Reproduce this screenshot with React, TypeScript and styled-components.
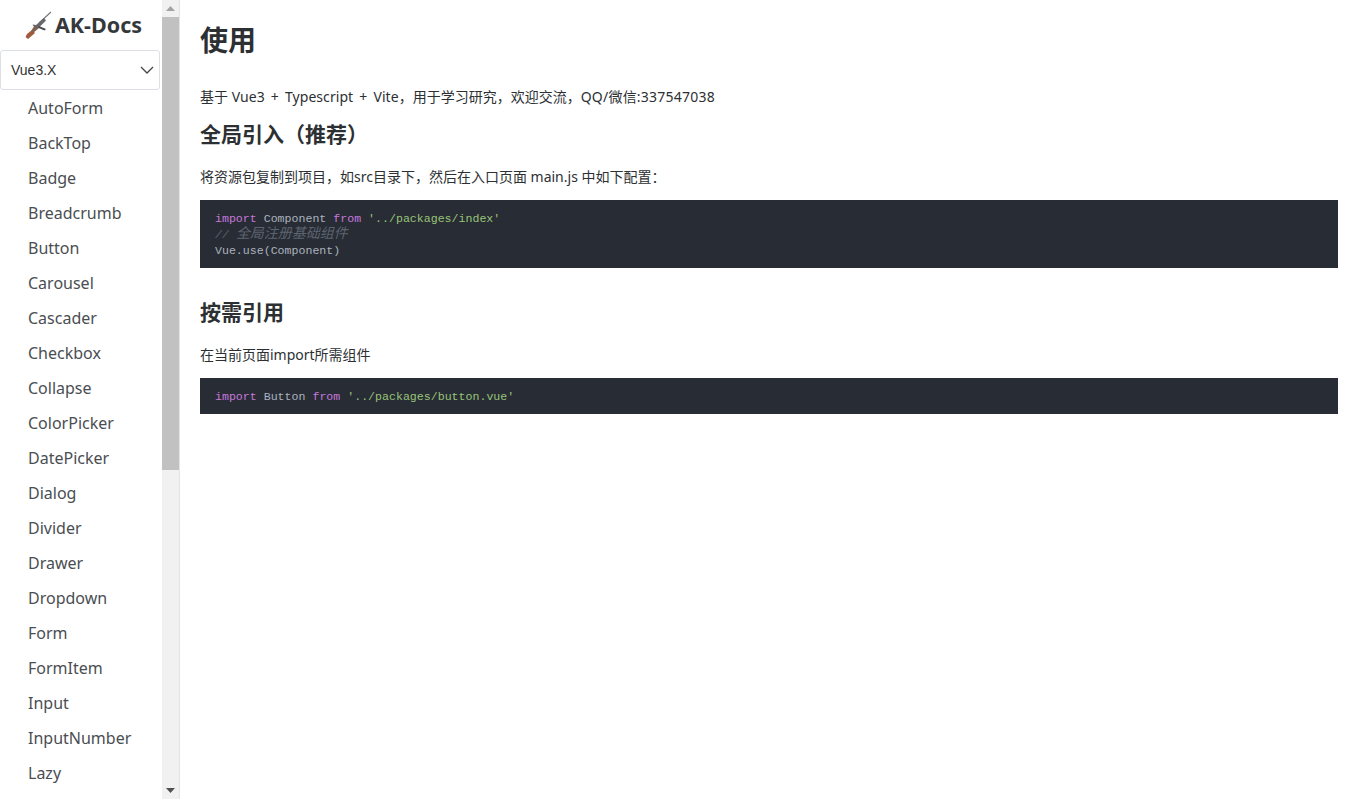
import React from "react";
import styled, { createGlobalStyle } from "styled-components";

const Global = createGlobalStyle`
  html, body { margin: 0; padding: 0; height: 100%; overflow: hidden; background: #fff; }
  #root { height: 100%; }
  * { box-sizing: border-box; }
`;

const SANS = `"Noto Sans", "Noto Sans CJK SC", sans-serif`;

const Page = styled.div`
  display: flex;
  height: 799px;
  font-family: ${SANS};
  color: #2c3033;
`;

const Sidebar = styled.aside`
  flex: 0 0 180px;
  height: 100%;
  display: flex;
  overflow: hidden;
  border-right: 1px solid #e4e4e4;
`;

const SideContent = styled.div`
  flex: 0 0 162px;
  height: 100%;
  overflow: hidden;
`;

const ScrollBar = styled.div`
  flex: 0 0 17px;
  height: 100%;
  display: flex;
  flex-direction: column;
  background: #f1f1f1;
`;

const ScrollButton = styled.div`
  flex: 0 0 17px;
  display: flex;
  align-items: center;
  justify-content: center;
`;

const ScrollTrack = styled.div`
  flex: 1;
`;

const ScrollThumb = styled.div`
  height: 453px;
  background: #c1c1c1;
`;

const Brand = styled.div`
  height: 50px;
  display: flex;
  align-items: center;
  justify-content: center;
  gap: 3px;
  padding: 0 0 1px 4px;
`;

const BrandName = styled.span`
  font-size: 21.5px;
  font-weight: 700;
  color: #35383b;
  white-space: nowrap;
`;

const VersionSelect = styled.div`
  width: 160px;
  height: 40px;
  padding: 0 5px 0 10px;
  display: flex;
  align-items: center;
  justify-content: space-between;
  background: #fff;
  border: 1px solid #dcdfe6;
  border-radius: 3px;
  font-family: "Liberation Sans", Arial, sans-serif;
  font-size: 14px;
  color: #333;
`;

const Nav = styled.ul`
  list-style: none;
  margin: 0;
  padding: 1px 0 0;
`;

const NavItem = styled.li`
  height: 35px;
  line-height: 35px;
  padding-left: 28px;
  font-size: 16px;
  color: #4a4e52;
  white-space: nowrap;
`;

const Main = styled.main`
  flex: 1;
  min-width: 0;
  padding: 0 20px;
`;

const Title = styled.h1`
  margin: 0;
  padding-top: 20px;
  height: 87px;
  font-size: 28px;
  line-height: 40px;
  font-weight: 700;
  color: #2c3033;
`;

const Paragraph = styled.p<{ $top?: number }>`
  margin: ${(p) => p.$top ?? 0}px 0 0;
  font-size: 14px;
  line-height: 20px;
  color: #2c3033;
`;

const WideRun = styled.span`
  word-spacing: 2.4px;
  letter-spacing: 0.06px;
`;

const ContactRun = styled.span`
  letter-spacing: 0.22px;
`;

const Heading = styled.h2`
  margin: 0;
  font-size: 21px;
  line-height: 30px;
  font-weight: 700;
  color: #2c3033;
`;

const Section = styled.section<{ $top: number }>`
  margin-top: ${(p) => p.$top}px;
  display: flex;
  flex-direction: column;
`;

const Code = styled.pre`
  margin: 13px 0 0;
  padding: 10px 15px;
  background: #282c34;
  color: #abb2bf;
  font-family: "Liberation Mono", "Noto Sans CJK SC", monospace;
  font-size: 11.6px;
  line-height: 16px;
`;

const CodeLine = styled.span`
  display: block;
  height: 16px;
  line-height: 17px;
`;

const Keyword = styled.span`
  color: #c678dd;
`;
const Str = styled.span`
  color: #98c379;
`;
const Comment = styled.span`
  color: #5c6370;
  font-style: italic;
`;
const CommentCjk = styled.span`
  font-size: 14px;
  line-height: 0;
`;

const items = [
  "AutoForm","BackTop","Badge","Breadcrumb","Button","Carousel","Cascader","Checkbox","Collapse",
  "ColorPicker","DatePicker","Dialog","Divider","Drawer","Dropdown","Form","FormItem","Input",
  "InputNumber","Lazy",
];

const Rifle = () => (
  <svg width="28" height="30" viewBox="0 0 28 30" aria-hidden="true">
    <path d="M27 2 L15 13" stroke="#77797c" strokeWidth="1.2" fill="none" />
    <path d="M20 8 L12 15 L8.5 14.5 L10 17 L14 18.5 L22 10.5 Z" fill="#66686c" />
    <path d="M15 16 L22 19 L20.5 20.5 L13.5 17.5 Z" fill="#4a4b4e" />
    <path d="M11 15 L15 18 L9 23 L7 21 Z" fill="#7a6154" />
    <path d="M8 20 L11 23 L4 29 L1.5 27 L3 24 Z" fill="#a05a3e" />
  </svg>
);

const Chevron = () => (
  <svg width="14" height="8" viewBox="0 0 14 8" aria-hidden="true">
    <path d="M1 1 L7 7 L13 1" stroke="#444" strokeWidth="1.3" fill="none" />
  </svg>
);

const Arrow = ({ up, color }: { up?: boolean; color: string }) => (
  <svg width="9" height="5" viewBox="0 0 9 5" aria-hidden="true">
    <path d={up ? "M4.5 0 L9 5 L0 5 Z" : "M0 0 L9 0 L4.5 5 Z"} fill={color} />
  </svg>
);

export default function App() {
  return (
    <>
      <Global />
      <Page>
        <Sidebar>
          <SideContent>
            <Brand>
              <Rifle />
              <BrandName>AK-Docs</BrandName>
            </Brand>
            <VersionSelect>
              Vue3.X
              <Chevron />
            </VersionSelect>
            <Nav>
              {items.map((i) => (
                <NavItem key={i}>{i}</NavItem>
              ))}
            </Nav>
          </SideContent>
          <ScrollBar>
            <ScrollButton>
              <Arrow up color="#a3a3a3" />
            </ScrollButton>
            <ScrollTrack>
              <ScrollThumb />
            </ScrollTrack>
            <ScrollButton>
              <Arrow color="#505050" />
            </ScrollButton>
          </ScrollBar>
        </Sidebar>
        <Main>
          <Title>使用</Title>
          <Paragraph>
            基于 <WideRun>Vue3 + Typescript + Vite</WideRun>，用于学习研究，欢迎交流，<ContactRun>QQ/微信:337547038</ContactRun>
          </Paragraph>
          <Section $top={12}>
            <Heading>全局引入（推荐）</Heading>
            <Paragraph $top={18}>将资源包复制到项目，如src目录下，然后在入口页面 main.js 中如下配置：</Paragraph>
            <Code>
              <CodeLine>
                <Keyword>import</Keyword> Component <Keyword>from</Keyword> <Str>'../packages/index'</Str>
              </CodeLine>
              <CodeLine>
                <Comment>// <CommentCjk>全局注册基础组件</CommentCjk></Comment>
              </CodeLine>
              <CodeLine>Vue.use(Component)</CodeLine>
            </Code>
          </Section>
          <Section $top={29}>
            <Heading>按需引用</Heading>
            <Paragraph $top={18}>在当前页面import所需组件</Paragraph>
            <Code>
              <CodeLine>
                <Keyword>import</Keyword> Button <Keyword>from</Keyword> <Str>'../packages/button.vue'</Str>
              </CodeLine>
            </Code>
          </Section>
        </Main>
      </Page>
    </>
  );
}
